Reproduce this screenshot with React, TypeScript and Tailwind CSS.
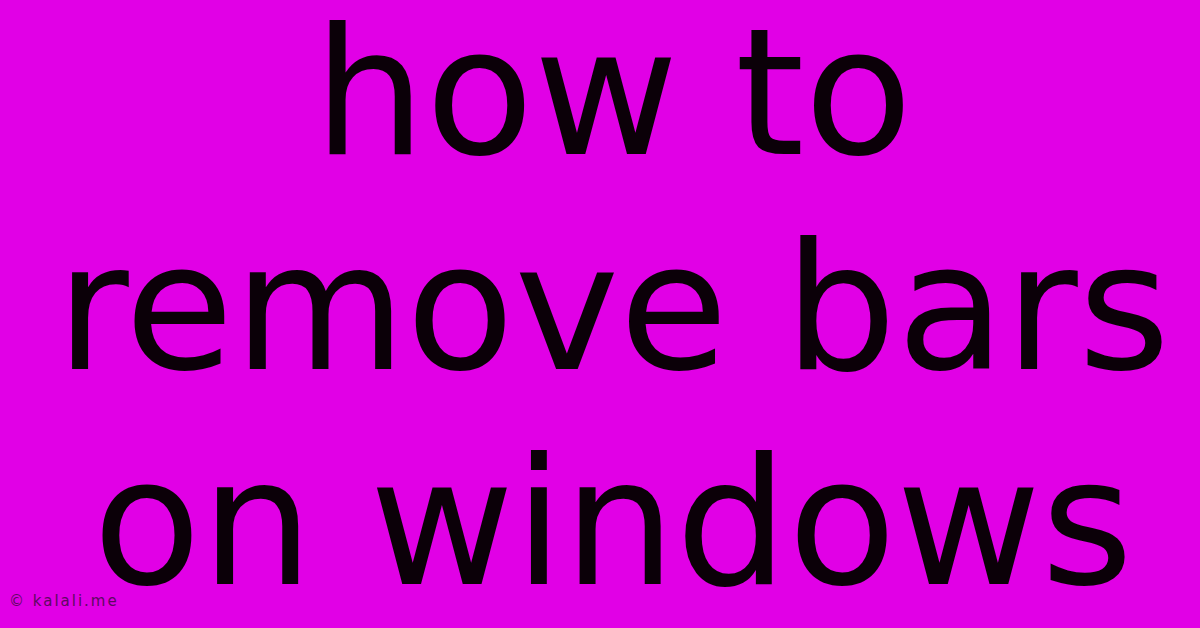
export default function App() {
  return (
    <div className="relative w-[1200px] h-[628px] overflow-hidden bg-[#e100e6] flex items-center justify-center">
      <h1
        className="pl-[26px] pb-[12px] text-center text-[177px] leading-[215px] text-[#0b0008] font-normal"
        style={{ fontFamily: '"DejaVu Sans", sans-serif' }}
      >
        how to
        <br />
        remove bars
        <br />
        on windows
      </h1>
      <div
        className="absolute left-[9px] bottom-[19px] text-[15px] leading-none tracking-[2px] text-[#5c0a60]"
        style={{ fontFamily: '"DejaVu Sans", sans-serif' }}
      >
        © kalali.me
      </div>
    </div>
  )
}
